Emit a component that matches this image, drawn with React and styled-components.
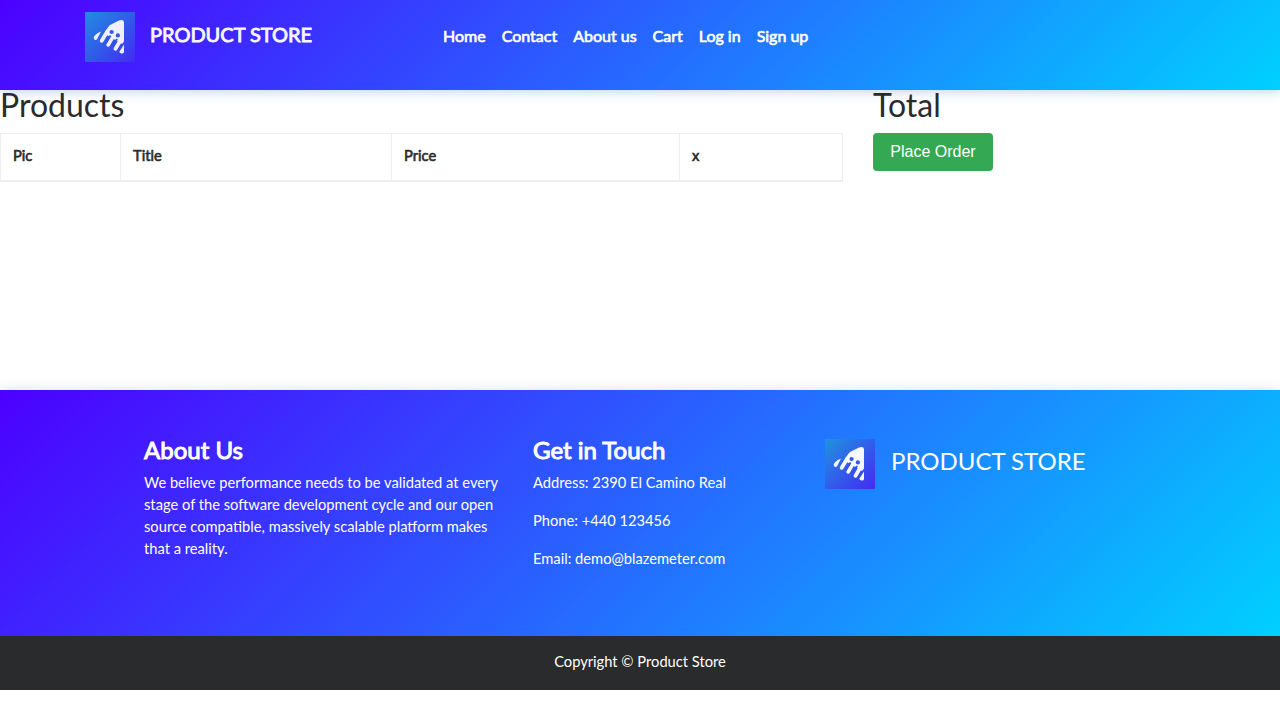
import React from "react";
import styled, { createGlobalStyle, css } from "styled-components";

const GlobalStyle = createGlobalStyle`
  *, *::before, *::after { box-sizing: border-box; }
  body {
    margin: 0;
    background: #fff;
    color: #292b2c;
    font-family: Lato, sans-serif;
    font-size: 14.7px;
    line-height: 22px;
  }
  h2, h4, p { margin: 0; }
`;

const brandGradient = "linear-gradient(135deg, #4c00ff 0%, #2962ff 48%, #00d0ff 100%)";

const heavy = css`
  font-weight: 400;
  -webkit-text-stroke: ${(p) => p.$stroke || 0.6}px currentColor;
`;

const Header = styled.header`
  height: 90px;
  padding: 12px 85px 0;
  display: flex;
  align-items: flex-start;
  background: ${brandGradient};
  box-shadow: 0 2px 10px rgba(0, 90, 200, 0.25);
`;

const Brand = styled.a`
  ${heavy}
  display: flex;
  width: 358px;
  gap: 15px;
  color: #fff;
  font-size: 20px;
  line-height: 45px;
  opacity: 0.96;
`;

const NavLinks = styled.nav`
  display: flex;
  gap: 16px;
  padding-top: 11px;
`;

const NavLink = styled.a`
  ${heavy}
  color: #fff;
  font-size: 16px;
  line-height: 25px;
`;

const Main = styled.main`
  display: flex;
  gap: 30px;
  height: 300px;
`;

const ProductsColumn = styled.section`
  width: 843px;
`;

const TotalColumn = styled.section`
  flex: 1;
`;

const Heading = styled.h2`
  height: 43px;
  font-size: 32px;
  font-weight: 400;
  line-height: 30px;
`;

const Table = styled.table`
  width: 842.5px;
  table-layout: fixed;
  border-collapse: collapse;
`;

const HeadCell = styled.th`
  ${heavy}
  width: ${(p) => p.$width}px;
  height: 47px;
  padding: 0 12px 3px;
  text-align: left;
  border: 1px solid #eceeef;
  border-bottom-width: 2px;
`;

const OrderButton = styled.button`
  width: 120px;
  height: 38px;
  padding: 0;
  border: 0;
  border-radius: 4px;
  background: #34a853;
  color: #fff;
  font: 16px/24px "Liberation Sans", Arial, sans-serif;
`;

const Footer = styled.footer`
  height: 246px;
  padding: 44px 144px 0;
  display: flex;
  color: #fff;
  background: ${brandGradient};
  box-shadow: 0 -2px 10px rgba(0, 90, 200, 0.12);
`;

const FooterColumn = styled.section`
  width: ${(p) => p.$width}px;
`;

const FooterTitle = styled.h4`
  ${heavy}
  height: 37px;
  font-size: 24px;
  line-height: 31px;
`;

const AboutText = styled.p`
  width: 360px;
`;

const ContactLine = styled.p`
  margin-bottom: 16px;
`;

const FooterBrand = styled.div`
  display: flex;
  gap: 16px;
  padding-top: 5px;
  font-size: 24px;
  line-height: 43px;
`;

const CopyrightBar = styled.div`
  height: 54px;
  padding-top: 14px;
  text-align: center;
  color: #fff;
  background: #292b2c;
`;

const LogoSvg = styled.svg`
  display: block;
  flex: none;
  width: 50px;
  height: 50px;
`;

function Logo({ id }) {
  return (
    <LogoSvg viewBox="0 0 50 50" aria-hidden="true">
      <defs>
        <linearGradient id={id} x1="0" y1="0" x2="1" y2="1">
          <stop offset="0" stopColor="#1f93df" />
          <stop offset="1" stopColor="#432bf2" />
        </linearGradient>
      </defs>
      <rect width="50" height="50" fill={`url(#${id})`} />
      <g fill="#f5f9ff">
        <path d="M37 8Q39 8.3 39 10.5V29.5L37 32L20.2 22L20.5 19L23.2 15Q24.3 13.4 26 12.6L34 8.6Q35.7 7.7 37 8Z" />
        <path d="M16 19.5L12 27.2Q10.8 28.7 9.4 27.4Q7.8 25.6 9.6 23.7Q12 21 16 19.5Z" />
        <path d="M39 32.5V40Q38.8 41.8 36.5 41.6Q34 41.1 34.5 39.5Z" />
      </g>
      <g stroke="#f5f9ff" strokeWidth="3.8" strokeLinecap="round" fill="none">
        <path d="M22.3 19.5L16.7 28.8" />
        <path d="M28.8 23L23.2 32.8" />
        <path d="M36 27.5L30.5 36.8" />
      </g>
      <g stroke="#3352eb" strokeWidth="1.9" fill="none">
        <path d="M25.6 23.6L20.6 31.6" />
        <path d="M32 26.9L27 35.2" />
      </g>
      <g fill="#3257eb">
        <circle cx="26.6" cy="20" r="2.1" />
        <circle cx="32.9" cy="23.4" r="2.1" />
      </g>
    </LogoSvg>
  );
}

const links = ["Home", "Contact", "About us", "Cart", "Log in", "Sign up"];
const columns = [
  ["Pic", 120],
  ["Title", 271],
  ["Price", 288],
  ["x", 163],
];
const contacts = [
  "Address: 2390 El Camino Real",
  "Phone: +440 123456",
  "Email: demo@blazemeter.com",
];

export default function App() {
  return (
    <>
      <GlobalStyle />
      <Header>
        <Brand $stroke={0.9}>
          <Logo id="headerLogo" />
          PRODUCT STORE
        </Brand>
        <NavLinks>
          {links.map((label) => (
            <NavLink key={label} $stroke={0.65}>{label}</NavLink>
          ))}
        </NavLinks>
      </Header>
      <Main>
        <ProductsColumn>
          <Heading>Products</Heading>
          <Table>
            <thead>
              <tr>
                {columns.map(([label, width]) => (
                  <HeadCell key={label} $width={width}>{label}</HeadCell>
                ))}
              </tr>
            </thead>
          </Table>
        </ProductsColumn>
        <TotalColumn>
          <Heading>Total</Heading>
          <OrderButton type="button">Place Order</OrderButton>
        </TotalColumn>
      </Main>
      <Footer>
        <FooterColumn $width={389}>
          <FooterTitle $stroke={1}>About Us</FooterTitle>
          <AboutText>
            We believe performance needs to be validated at every stage of the
            software development cycle and our open source compatible, massively
            scalable platform makes that a reality.
          </AboutText>
        </FooterColumn>
        <FooterColumn $width={292}>
          <FooterTitle $stroke={1}>Get in Touch</FooterTitle>
          {contacts.map((line) => (
            <ContactLine key={line}>{line}</ContactLine>
          ))}
        </FooterColumn>
        <FooterBrand>
          <Logo id="footerLogo" />
          PRODUCT STORE
        </FooterBrand>
      </Footer>
      <CopyrightBar>Copyright © Product Store</CopyrightBar>
    </>
  );
}
